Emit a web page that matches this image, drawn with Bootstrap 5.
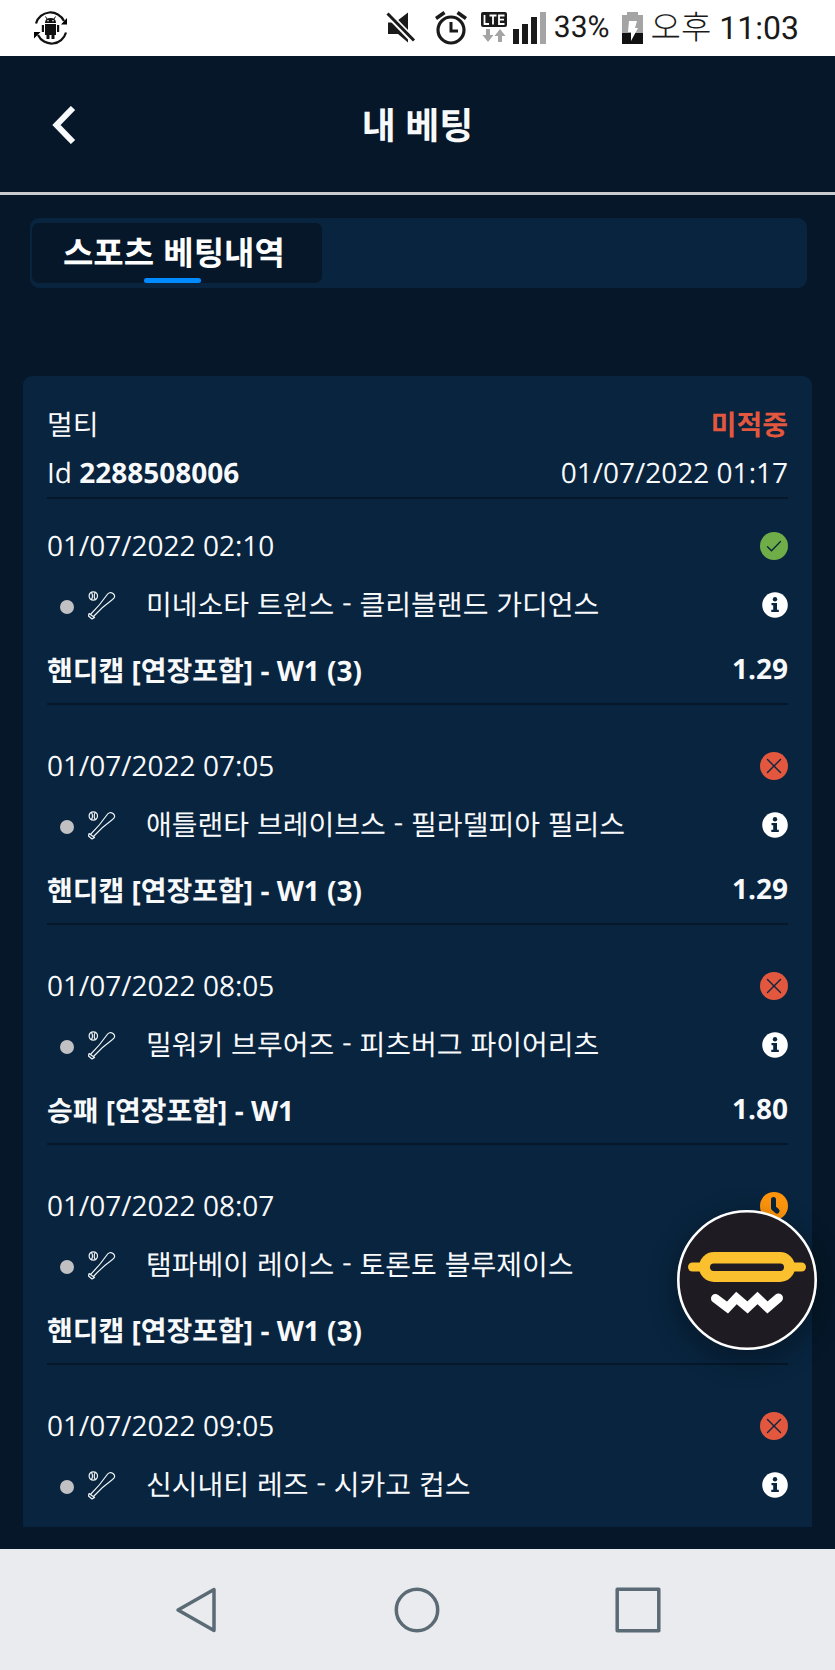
<!DOCTYPE html>
<html lang="ko">
<head>
<meta charset="utf-8">
<meta name="viewport" content="width=device-width, initial-scale=1">
<title>내 베팅</title>
<link rel="stylesheet" href="https://cdn.jsdelivr.net/npm/bootstrap@5.3.0/dist/css/bootstrap.min.css">
<style>
  :root { --ink: #051728; --panel: #08243e; --lost: #e2573d; }
  body { background: var(--ink); color: #f8f9fb; font-family: "Open Sans", "Noto Sans CJK KR", sans-serif; font-size: 28px; line-height: 36px; text-rendering: geometricPrecision; }
  button { text-rendering: inherit; }
  svg { display: block; flex: none; }
  .hangul { font-family: "Noto Sans CJK KR", sans-serif; }
  .statusbar { height: 56px; padding: 0 36px 0 34px; background: #fff; color: #1a1a1a; font: 30px/40px Roboto, "Noto Sans CJK KR", sans-serif; }
  .clock { font-size: 33px; font-weight: 300; }
  .clock span { font-size: 32px; font-weight: 400; }
  .appbar { height: 139px; border-bottom: 3px solid #c9cbce; padding: 2px 48px 0; }
  .appbar h1 { font-size: 37px; line-height: 44px; font-weight: 700; }
  .side { width: 32px; }
  .plain { background: none; border: 0; padding: 0; color: inherit; }
  .page { padding: 23px 23px 22px; }
  .tabs { margin: 0 5px 88px 7px; padding: 5px 2px; background: var(--panel); border-radius: 9px; }
  .tab-on { position: relative; width: 290px; height: 60px; padding: 0 0 4px 31px; background: var(--ink); border-radius: 7px; font-size: 33px; line-height: 44px; font-weight: 700; text-align: left; color: #fff; }
  .tab-on::after { content: ""; position: absolute; left: 112px; bottom: 0; width: 57px; height: 5px; border-radius: 3px; background: #008cff; }
  .slip { background: var(--panel); border-radius: 9px 9px 0 0; padding: 0 24px 27px; }
  .slip-head { padding-top: 31px; border-bottom: 2px solid var(--ink); padding-bottom: 6px; }
  .slip-head .line { height: 36px; }
  .slip-head .line + .line { margin-top: 12px; }
  .lost { color: var(--lost); }
  .bet { padding: 47px 0 14px; border-bottom: 2px solid var(--ink); }
  .bet:first-child { padding-top: 33px; }
  .bet:last-child { border: 0; padding-bottom: 0; }
  .bet .line { height: 28px; }
  .teams { margin-top: 31px; }
  .teams .hangul { padding-bottom: 2px; }
  .teams .game { width: 83px; padding-left: 13px; gap: 14px; }
  .dot { width: 14px; height: 14px; margin-top: 4px; border-radius: 50%; background: #c1c1c3; }
  .market { margin-top: 34px; height: 36px; font-weight: 700; }
  .odds { padding-bottom: 4px; }
  .fab { position: fixed; right: 18px; bottom: 320px; border-radius: 50%; box-shadow: 0 8px 28px rgba(0,0,0,.35); }
  .navkeys { background: #e9ebee; height: 121px; padding: 0 87px 0 85px; color: #5b6b75; }
</style>
</head>
<body>
<svg width="0" height="0" class="position-absolute" aria-hidden="true">
  <defs>
    <symbol id="bat" viewBox="0 0 28 29"><g fill="none" stroke="#f1f4f6" stroke-width="1.2" stroke-linejoin="round" stroke-linecap="round"><circle cx="5.300" cy="5" r="4.200"/><path d="M3.500 1.500q2 3.500 0 7M7.200 1.500q-2 3.500 0 7M2.500 23.500Q12 14 18.500 4.500Q21.500 0 25 2.500Q28.500 5.500 24.500 8.500Q14 16 5.500 25.500M1 22.500l5.500 4-2.500 1.500-3.500-3z"/></g></symbol>
    <symbol id="win" viewBox="0 0 28 28"><circle cx="14" cy="14" r="14" fill="#6fad49"/><path d="M7.500 14.800l4 4L20.500 9.500" fill="none" stroke="#08243e" stroke-width="1.300" stroke-linecap="round"/></symbol>
    <symbol id="lose" viewBox="0 0 28 28"><circle cx="14" cy="14" r="14" fill="#e2573d"/><path d="M7.500 7.500l13 13m0-13l-13 13" fill="none" stroke="#08243e" stroke-width="1.400" stroke-linecap="round"/></symbol>
    <symbol id="wait" viewBox="0 0 28 28"><circle cx="14" cy="14" r="14" fill="#ff950d"/><path d="M13.500 7.500v8.500l3.500 3" fill="none" stroke="#08243e" stroke-width="5" stroke-linecap="round" stroke-linejoin="round"/></symbol>
    <symbol id="info" viewBox="0 0 26 26"><circle cx="13" cy="13" r="12.800" fill="#fff"/><circle cx="13" cy="7.200" r="2.200" fill="#08243e"/><path d="M9.500 11h5.500v6.800h1.800v2.200H9.300v-2.200h1.900v-4.500H9.500z" fill="#08243e"/></symbol>
  </defs>
</svg>
<div class="d-flex flex-column min-vh-100">
  <div class="statusbar d-flex align-items-center">
    <svg class="me-auto" width="34" height="34" viewBox="0 0 34 34"><g fill="none" stroke="#111" stroke-width="2.200"><path d="M2 12.500A15 15 0 0 1 30 10M32 21.500A15 15 0 0 1 4 24"/></g><path d="M33 7v6.500h-6zM0 21h6.500L0 27.500z"/><g fill="#111"><path d="M11 12q0-5 5.500-5t5.500 5zM11 13h11v11H11zM7.800 14h2.200v7H7.800zM23 14h2.200v7H23zM12.500 24h3v4h-3zM17.500 24h3v4h-3z"/><path d="M13 8l-1.500-2.500M20 8l1.500-2.500" stroke="#111"/></g><circle cx="14" cy="9.700" r=".8" fill="#fff"/><circle cx="19" cy="9.700" r=".8" fill="#fff"/></svg>
    <svg width="30" height="32" viewBox="0 0 30 32"><path fill="#1a1a1a" d="M2 10.500h6l14 14v6l-10-8.500H2zM11 9l11-8.500v22z"/><path d="M1 1l28 29" stroke="#fff" stroke-width="6.500"/><path d="M1.500 1.500l26.500 27" stroke="#1a1a1a" stroke-width="3"/></svg>
    <svg width="32" height="34" viewBox="0 0 32 34" style="margin-left:19px"><g fill="none" stroke="#1a1a1a"><circle cx="16" cy="19" r="13" stroke-width="3.200"/><path d="M1 7.500l8.500-6M31 7.500l-8.500-6" stroke-width="3.600"/><path d="M16 11v9h7" stroke-width="3"/></g></svg>
    <svg width="26" height="32" viewBox="0 0 26 32" style="margin-left:14px"><rect width="26" height="15" rx="2" fill="#1a1a1a"/><path d="M3.500 3v9H8M8.500 3.500h7M12 3.500v9M23.500 3.500H18v8.500h5.500M18 7.700h5" fill="none" stroke="#fff" stroke-width="1.800"/><path d="M5 17h4v6h3.500L7 30 1.500 23H5zM17 30h4v-6h3.500L19 17l-5.500 7H17z" fill="#a4a4a4"/></svg>
    <svg width="33" height="32" viewBox="0 0 33 32" style="margin-left:6px"><path d="M0 17h6v15H0zM9 12h6v20H9zM18 5h6v27h-6z" fill="#1a1a1a"/><path d="M27 0h6v32h-6z" fill="#a4a4a4"/></svg>
    <span class="ms-2">33%</span>
    <svg width="21" height="32" viewBox="0 0 21 32" style="margin-left:12px"><path d="M0 3h5V0h11v3h5v18H0z" fill="#a4a4a4"/><path d="M0 21h21v11H0z" fill="#111"/><path d="M7 9h8l-2 7h3L9 29v-9H6z" fill="#fff"/></svg>
    <span class="clock ms-2">오후 <span>11:03</span></span>
  </div>
  <header class="appbar d-flex align-items-center justify-content-between">
    <button class="plain side" aria-label="뒤로"><svg width="32" height="38" viewBox="0 0 32 38"><path d="M25 2L8.500 19 25 36" fill="none" stroke="#f8f9fb" stroke-width="6"/></svg></button>
    <h1 class="m-0">내 베팅</h1>
    <span class="side"></span>
  </header>
  <main class="page flex-fill d-flex flex-column">
    <div class="tabs"><button class="plain tab-on hangul d-block">스포츠 베팅내역</button></div>
    <section class="slip flex-fill">
      <div class="slip-head">
        <div class="line d-flex justify-content-between"><span>멀티</span><strong class="lost">미적중</strong></div>
        <div class="line d-flex justify-content-between"><span>Id <strong>2288508006</strong></span><time>01/07/2022 01:17</time></div>
      </div>
      <div>
        <article class="bet">
          <div class="line d-flex align-items-center justify-content-between"><time>01/07/2022 02:10</time><svg width="28" height="28"><use href="#win"/></svg></div>
          <div class="line teams d-flex align-items-center"><span class="game d-flex align-items-center"><i class="dot"></i><svg width="28" height="29"><use href="#bat"/></svg></span><span class="hangul me-auto ps-3">미네소타 트윈스 - 클리블랜드 가디언스</span><button class="plain" aria-label="정보"><svg width="26" height="26"><use href="#info"/></svg></button></div>
          <div class="market d-flex align-items-center justify-content-between"><span>핸디캡 [연장포함] - W1 (3)</span><span class="odds">1.29</span></div>
        </article>
        <article class="bet">
          <div class="line d-flex align-items-center justify-content-between"><time>01/07/2022 07:05</time><svg width="28" height="28"><use href="#lose"/></svg></div>
          <div class="line teams d-flex align-items-center"><span class="game d-flex align-items-center"><i class="dot"></i><svg width="28" height="29"><use href="#bat"/></svg></span><span class="hangul me-auto ps-3">애틀랜타 브레이브스 - 필라델피아 필리스</span><button class="plain" aria-label="정보"><svg width="26" height="26"><use href="#info"/></svg></button></div>
          <div class="market d-flex align-items-center justify-content-between"><span>핸디캡 [연장포함] - W1 (3)</span><span class="odds">1.29</span></div>
        </article>
        <article class="bet">
          <div class="line d-flex align-items-center justify-content-between"><time>01/07/2022 08:05</time><svg width="28" height="28"><use href="#lose"/></svg></div>
          <div class="line teams d-flex align-items-center"><span class="game d-flex align-items-center"><i class="dot"></i><svg width="28" height="29"><use href="#bat"/></svg></span><span class="hangul me-auto ps-3">밀워키 브루어즈 - 피츠버그 파이어리츠</span><button class="plain" aria-label="정보"><svg width="26" height="26"><use href="#info"/></svg></button></div>
          <div class="market d-flex align-items-center justify-content-between"><span>승패 [연장포함] - W1</span><span class="odds">1.80</span></div>
        </article>
        <article class="bet">
          <div class="line d-flex align-items-center justify-content-between"><time>01/07/2022 08:07</time><svg width="28" height="28"><use href="#wait"/></svg></div>
          <div class="line teams d-flex align-items-center"><span class="game d-flex align-items-center"><i class="dot"></i><svg width="28" height="29"><use href="#bat"/></svg></span><span class="hangul me-auto ps-3">탬파베이 레이스 - 토론토 블루제이스</span></div>
          <div class="market d-flex align-items-center justify-content-between"><span>핸디캡 [연장포함] - W1 (3)</span></div>
        </article>
        <article class="bet">
          <div class="line d-flex align-items-center justify-content-between"><time>01/07/2022 09:05</time><svg width="28" height="28"><use href="#lose"/></svg></div>
          <div class="line teams d-flex align-items-center"><span class="game d-flex align-items-center"><i class="dot"></i><svg width="28" height="29"><use href="#bat"/></svg></span><span class="hangul me-auto ps-3">신시내티 레즈 - 시카고 컵스</span><button class="plain" aria-label="정보"><svg width="26" height="26"><use href="#info"/></svg></button></div>
        </article>
      </div>
    </section>
  </main>
  <nav class="navkeys d-flex align-items-center">
    <button class="plain flex-fill d-flex justify-content-center" aria-label="뒤로 가기"><svg width="46" height="46" viewBox="0 0 46 46"><path d="M41 2.500v41L5 23z" fill="none" stroke="currentColor" stroke-width="3.500" stroke-linejoin="round"/></svg></button>
    <button class="plain flex-fill d-flex justify-content-center" aria-label="홈"><svg width="46" height="46" viewBox="0 0 46 46"><circle cx="23" cy="23" r="20.700" fill="none" stroke="currentColor" stroke-width="3.500"/></svg></button>
    <button class="plain flex-fill d-flex justify-content-center" aria-label="최근 앱"><svg width="46" height="46" viewBox="0 0 46 46"><path d="M2.200 2.200h41.600v41.600H2.200z" fill="none" stroke="currentColor" stroke-width="3.500" stroke-linejoin="round"/></svg></button>
  </nav>
</div>
<button class="plain fab" aria-label="도우미"><svg width="140" height="140" viewBox="0 0 140 140"><circle cx="70" cy="70" r="68.700" fill="#1e1c22" stroke="#fff" stroke-width="2.600"/><path d="M15.500 57h109" stroke="#fbc02d" stroke-width="9" stroke-linecap="round"/><rect x="22" y="42" width="96" height="30" rx="15" fill="#fbc02d"/><rect x="33" y="53.500" width="74" height="7.500" rx="3.700" fill="#1e1c22"/><path d="M38.500 88.500L50.500 97.500 59.500 88 70.500 97.500 80.500 88 90.500 97.500 101.500 88" fill="none" stroke="#fff" stroke-width="9" stroke-linecap="round"/></svg></button>
<script src="https://cdn.jsdelivr.net/npm/bootstrap@5.3.0/dist/js/bootstrap.bundle.min.js"></script>
</body>
</html>
